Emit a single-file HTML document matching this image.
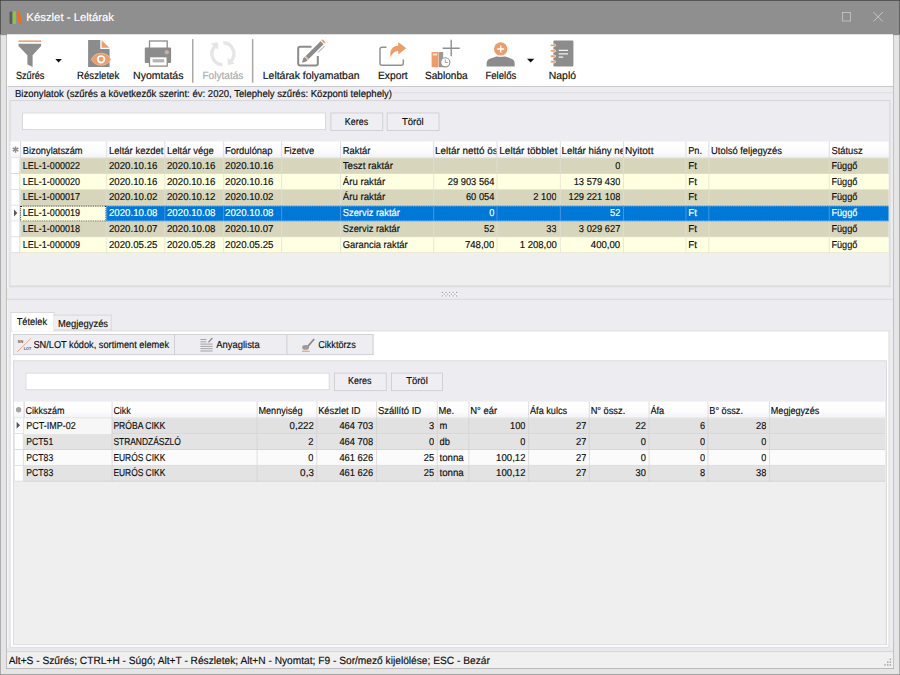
<!DOCTYPE html>
<html lang="hu">
<head>
<meta charset="utf-8">
<title>Készlet - Leltárak</title>
<style>
html,body{margin:0;padding:0;background:#e5e5e5;overflow:hidden;width:900px;height:675px}
#w{position:absolute;left:0;top:0;width:1024px;height:768px;transform:scale(0.87890625);transform-origin:0 0;overflow:hidden;
font-family:"Liberation Sans",sans-serif;font-size:11px;color:#111}
#w div,#w svg.a{position:absolute;box-sizing:border-box}
.t{white-space:nowrap;overflow:hidden;text-rendering:geometricPrecision;-webkit-text-stroke:0.2px currentColor}
.r{text-align:right}
.c{text-align:center}
</style>
</head>
<body>
<div id="w">
<div style="left:0px;top:0px;width:1024px;height:768px;background:#e5e5e5"></div>
<div style="left:0px;top:0px;width:1024px;height:1px;background:#3b3b3b"></div>
<div style="left:0px;top:0px;width:1px;height:39.7px;background:#3f3f3f"></div>
<div style="left:1023px;top:0px;width:1px;height:39.7px;background:#4a4a4a"></div>
<div style="left:0px;top:39px;width:1px;height:729px;background:#a6a6a6"></div>
<div style="left:1023px;top:39px;width:1px;height:729px;background:#a6a6a6"></div>
<div style="left:0px;top:767px;width:1024px;height:1px;background:#989898"></div>
<div style="left:7px;top:39px;width:1px;height:722px;background:#b9b9b9"></div>
<div style="left:1014px;top:39.7px;width:1px;height:721px;background:#dcdcde"></div>
<div style="left:1015px;top:39.7px;width:1px;height:721px;background:#c9c9c9"></div>
<div style="left:1016px;top:39px;width:1px;height:722px;background:#bdbdbd"></div>
<div style="left:7px;top:760px;width:1010px;height:1px;background:#b3b3b3"></div>
<div style="left:1px;top:1px;width:1022px;height:38.7px;background:#8f8f8f"></div>
<svg class="a" style="left:0px;top:0px" width="1024" height="39" viewBox="0 0 1024 39"><g transform="scale(1.137778)"><rect x="9.5" y="11.6" width="2.9" height="12.3" rx="0.8" fill="#5c5c5c"/>
<rect x="12.7" y="11.2" width="3.2" height="12.8" rx="0.8" fill="#8cc63f"/>
<path d="M16.5 12 l3 -0.8 l2.6 12 l-3 0.8 z" fill="#f26b1d"/>
<rect x="842.5" y="12.5" width="8" height="8.5" fill="none" stroke="#c2c2c2" stroke-width="0.9"/>
<path d="M873.5 12.2 L882.7 21.4 M882.7 12.2 L873.5 21.4" fill="none" stroke="#cccccc" stroke-width="0.9"/></g></svg>
<div class="t" style="left:30.20px;top:11.26px;width:198.38px;height:18px;line-height:18px;font-size:12.8px;text-align:left;transform:scaleX(1.0082);transform-origin:0 50%;color:#fff;">Készlet - Leltárak</div>
<div style="left:8px;top:98px;width:1008px;height:643px;background:#ececf1"></div>
<div style="left:8px;top:39px;width:1008px;height:58.5px;background:#fff"></div>
<div style="left:8px;top:97.5px;width:1008px;height:1px;background:#c4c4c8"></div>
<div style="left:447px;top:105.6px;width:569px;height:8.4px;background:#ececee"></div>
<div style="left:447px;top:104.6px;width:569px;height:1px;background:#dcdce1"></div>
<svg class="a" style="left:8px;top:39px" width="1008" height="58" viewBox="8 39 1008 58"><g transform="scale(1.137778)">
<!-- filter -->
<rect x="18.5" y="40.4" width="22.6" height="1.5" fill="#ec9d6b"/>
<path d="M18.5 43.8 H41.1 V46 L32.6 55.2 V67.1 L27.4 64.5 V55.2 L18.5 46 Z" fill="#8c8c8c"/>
<path d="M55.3 59.1 H61.9 L58.6 62.4 Z" fill="#111"/>
<!-- details -->
<path d="M88.1 40.1 H100.3 V49 H109.6 V67.1 H88.1 Z" fill="#8c8c8c"/>
<path d="M101.6 40.3 L109.4 47.7 H101.6 Z" fill="#ec9d6b"/>
<path d="M91.3 59.3 C95.4 51.2 106.8 51.2 110.9 59.3 C106.8 67.4 95.4 67.4 91.3 59.3 Z" fill="#ec9d6b" stroke="#f3dccd" stroke-width="0.5"/>
<circle cx="101.1" cy="59.3" r="3.3" fill="none" stroke="#fff" stroke-width="1.7"/>
<!-- printer -->
<rect x="149.5" y="41" width="17.7" height="8" fill="#fff" stroke="#8c8c8c" stroke-width="1.3"/>
<rect x="144.8" y="47.5" width="26.3" height="15.5" rx="1" fill="#8c8c8c"/>
<rect x="149.5" y="56.7" width="17.7" height="9.4" fill="#fff" stroke="#8c8c8c" stroke-width="1.3"/>
<rect x="152.6" y="59.2" width="11.6" height="3.2" fill="#b4b4b4"/>
<circle cx="166.8" cy="52.3" r="1.8" fill="#d9a79a" stroke="#c8c8c8" stroke-width="0.5"/>
<!-- separators -->
<rect x="192" y="39.1" width="1.5" height="43.6" fill="#a9a9a9"/>
<rect x="251.9" y="39.1" width="1.5" height="43.6" fill="#a9a9a9"/>
<!-- refresh (disabled) -->
<g fill="none" stroke="#e6e6e6" stroke-width="3.4">
<path d="M222.52 64.69 A11.0 11.0 0 0 1 214.73 46.34"/>
<path d="M223.28 42.71 A11.0 11.0 0 0 1 231.07 61.06"/>
</g>
<path d="M210.80 43.54 L218.07 42.34 L218.15 49.71 Z" fill="#e6e6e6"/>
<path d="M235.00 63.86 L227.73 65.06 L227.65 57.69 Z" fill="#e6e6e6"/>
<!-- edit -->
<path d="M311.5 46.8 H300.2 Q298.2 46.8 298.2 48.8 V63.6 Q298.2 65.6 300.2 65.6 H315.8 Q317.8 65.6 317.8 63.6 V56" fill="none" stroke="#8c8c8c" stroke-width="2"/>
<path d="M302 62.8 L303.2 58.6 L320.6 41.2 L323.6 44.2 L306.2 61.6 Z" fill="#8c8c8c" stroke="#fff" stroke-width="1.1" paint-order="stroke"/>
<path d="M304.5 57.3 L305.9 55.9 L308.9 58.9 L307.5 60.3 Z" fill="#f1c6ab"/>
<path d="M321.3 40.5 L322.5 39.3 L325.5 42.3 L324.3 43.5 Z" fill="#ec9d6b"/>
<path d="M318.2 52.4 L324.4 46.2" stroke="#8c8c8c" stroke-width="0.9" fill="none"/>
<!-- export -->
<path d="M386.5 47.2 H382 Q380 47.2 380 49.2 V63.2 Q380 65.2 382 65.2 H401.3 Q403.3 65.2 403.3 63.2 V59.5" fill="none" stroke="#929292" stroke-width="1.5"/>
<path d="M398.3 41.9 L406.2 48.3 L398.3 54.6 V51 Q393 50.6 390.6 57.6 Q388.6 47 398.3 45.6 Z" fill="#ec9d6b"/>
<!-- template -->
<rect x="431.6" y="51.9" width="7" height="15.3" rx="0.6" fill="#ec9d6b"/>
<rect x="432.8" y="53.6" width="4.4" height="1.8" fill="#fbe9dc"/>
<rect x="438.9" y="51.9" width="4.3" height="15.3" rx="0.6" fill="#9a9a9a"/>
<circle cx="445.3" cy="62.3" r="4.6" fill="#fff" stroke="#909090" stroke-width="1.1"/>
<path d="M445.3 59.6 V62.5 H447.6" fill="none" stroke="#909090" stroke-width="0.9"/>
<path d="M442.6 48.2 H459.7 M451.2 39.7 V56.2" fill="none" stroke="#8f8f8f" stroke-width="1.4"/>
<!-- responsible -->
<path d="M486.6 66.6 V63.4 Q486.6 59.6 490.6 58.4 L496.4 56.4 H505 L510.8 58.4 Q514.7 59.6 514.7 63.4 V66.6 Z" fill="#8c8c8c"/>
<circle cx="500.7" cy="48.9" r="7.9" fill="#fff"/>
<circle cx="500.7" cy="48.9" r="6.7" fill="#ec9d6b"/>
<path d="M497.2 48.9 H504.2 M500.7 45.4 V52.4" fill="none" stroke="#fff" stroke-width="1.5"/>
<path d="M527 58.7 H534.3 L530.65 62.4 Z" fill="#111"/>
<!-- log -->
<rect x="553.4" y="40.6" width="20" height="26" rx="0.8" fill="#8c8c8c"/>
<g fill="#ec9d6b" stroke="#fff" stroke-width="0.6">
<rect x="550.4" y="44.2" width="5.2" height="2.3" rx="1.1"/>
<rect x="550.4" y="49.7" width="5.2" height="2.3" rx="1.1"/>
<rect x="550.4" y="55.1" width="5.2" height="2.3" rx="1.1"/>
<rect x="550.4" y="60.6" width="5.2" height="2.3" rx="1.1"/>
</g>
<path d="M558.7 50.4 H568 M558.7 53.8 H568 M558.7 57.1 H563.2" fill="none" stroke="#f2f2f2" stroke-width="1.2"/>
</g></svg>
<div class="t" style="left:-57.77px;top:77.84px;width:184.59px;height:16px;line-height:16px;font-size:12px;text-align:center;transform:scaleX(0.8668);transform-origin:50% 50%;color:#111;">Szűrés</div>
<div class="t" style="left:23.77px;top:77.84px;width:175.36px;height:16px;line-height:16px;font-size:12px;text-align:center;transform:scaleX(0.9124);transform-origin:50% 50%;color:#111;">Részletek</div>
<div class="t" style="left:100.02px;top:77.84px;width:160.18px;height:16px;line-height:16px;font-size:12px;text-align:center;transform:scaleX(0.9989);transform-origin:50% 50%;color:#111;">Nyomtatás</div>
<div class="t" style="left:170.13px;top:77.84px;width:167.18px;height:16px;line-height:16px;font-size:12px;text-align:center;transform:scaleX(0.9570);transform-origin:50% 50%;color:#ababab;">Folytatás</div>
<div class="t" style="left:272.52px;top:77.84px;width:162.08px;height:16px;line-height:16px;font-size:12px;text-align:center;transform:scaleX(0.9872);transform-origin:50% 50%;color:#111;">Leltárak folyamatban</div>
<div class="t" style="left:364.61px;top:77.84px;width:163.93px;height:16px;line-height:16px;font-size:12px;text-align:center;transform:scaleX(0.9760);transform-origin:50% 50%;color:#111;">Export</div>
<div class="t" style="left:423.65px;top:77.84px;width:167.60px;height:16px;line-height:16px;font-size:12px;text-align:center;transform:scaleX(0.9547);transform-origin:50% 50%;color:#111;">Sablonba</div>
<div class="t" style="left:482.49px;top:77.84px;width:175.75px;height:16px;line-height:16px;font-size:12px;text-align:center;transform:scaleX(0.9104);transform-origin:50% 50%;color:#111;">Felelős</div>
<div class="t" style="left:559.05px;top:77.84px;width:161.79px;height:16px;line-height:16px;font-size:12px;text-align:center;transform:scaleX(0.9889);transform-origin:50% 50%;color:#111;">Napló</div>
<div class="t" style="left:16.90px;top:99.05px;width:733.08px;height:16px;line-height:16px;font-size:11.4px;text-align:left;transform:scaleX(0.9549);transform-origin:0 50%;">Bizonylatok (szűrés a következők szerint: év: 2020, Telephely szűrés: Központi telephely)</div>
<div style="left:11px;top:114px;width:1002px;height:213px;border:1px solid #d2d2d6;background:#ececf1"></div>
<div style="left:8px;top:98px;width:1px;height:643px;background:#f6f6f8"></div>
<div style="left:25.4px;top:128.2px;width:345.6px;height:19.6px;background:#fff;border:1px solid #d3d3d7"></div>
<div style="left:376px;top:128px;width:60px;height:21px;background:#efeff3;border:1px solid #cdcdd1"></div>
<div class="t" style="left:372.39px;top:130.95px;width:67.22px;height:16px;line-height:16px;font-size:11.4px;text-align:center;transform:scaleX(0.8926);transform-origin:50% 50%;">Keres</div>
<div style="left:440px;top:128px;width:60px;height:21px;background:#efeff3;border:1px solid #cdcdd1"></div>
<div class="t" style="left:438.34px;top:130.95px;width:63.32px;height:16px;line-height:16px;font-size:11.4px;text-align:center;transform:scaleX(0.9476);transform-origin:50% 50%;">Töröl</div>
<div style="left:12px;top:161px;width:999px;height:165px;background:#efefef"></div>
<div style="left:12px;top:161px;width:999px;height:19px;background:linear-gradient(#ffffff,#fdfdfe 55%,#f4f4f8);border-bottom:1px solid #e4e4e8"></div>
<div style="left:23.3px;top:161px;width:1px;height:19px;background:#d9d9e1"></div>
<div class="t" style="left:25.80px;top:163.75px;width:103.00px;height:16px;line-height:16px;font-size:11.4px;text-align:left;transform:scaleX(0.9243);transform-origin:0 50%;">Bizonylatszám</div>
<div style="left:121px;top:161px;width:1px;height:19px;background:#d9d9e1"></div>
<div class="t" style="left:123.50px;top:163.75px;width:66.83px;height:16px;line-height:16px;font-size:11.4px;text-align:left;transform:scaleX(0.9502);transform-origin:0 50%;">Leltár kezdet</div>
<div style="left:187px;top:161px;width:1px;height:19px;background:#d9d9e1"></div>
<div class="t" style="left:189.50px;top:163.75px;width:68.12px;height:16px;line-height:16px;font-size:11.4px;text-align:left;transform:scaleX(0.9425);transform-origin:0 50%;">Leltár vége</div>
<div style="left:253.7px;top:161px;width:1px;height:19px;background:#d9d9e1"></div>
<div class="t" style="left:256.20px;top:163.75px;width:68.06px;height:16px;line-height:16px;font-size:11.4px;text-align:left;transform:scaleX(0.9388);transform-origin:0 50%;">Fordulónap</div>
<div style="left:320.1px;top:161px;width:1px;height:19px;background:#d9d9e1"></div>
<div class="t" style="left:322.60px;top:163.75px;width:68.68px;height:16px;line-height:16px;font-size:11.4px;text-align:left;transform:scaleX(0.9377);transform-origin:0 50%;">Fizetve</div>
<div style="left:387px;top:161px;width:1px;height:19px;background:#d9d9e1"></div>
<div class="t" style="left:389.50px;top:163.75px;width:109.89px;height:16px;line-height:16px;font-size:11.4px;text-align:left;transform:scaleX(0.9382);transform-origin:0 50%;">Raktár</div>
<div style="left:492.6px;top:161px;width:1px;height:19px;background:#d9d9e1"></div>
<div class="t" style="left:495.10px;top:163.75px;width:71.11px;height:16px;line-height:16px;font-size:11.4px;text-align:left;transform:scaleX(0.9871);transform-origin:0 50%;">Leltár nettó ös</div>
<div style="left:565.3px;top:161px;width:1px;height:19px;background:#d9d9e1"></div>
<div class="t" style="left:567.80px;top:163.75px;width:68.60px;height:16px;line-height:16px;font-size:11.4px;text-align:left;transform:scaleX(1.0058);transform-origin:0 50%;">Leltár többlet</div>
<div style="left:636.8px;top:161px;width:1px;height:19px;background:#d9d9e1"></div>
<div class="t" style="left:639.30px;top:163.75px;width:71.87px;height:16px;line-height:16px;font-size:11.4px;text-align:left;transform:scaleX(0.9671);transform-origin:0 50%;">Leltár hiány ne</div>
<div style="left:708.8px;top:161px;width:1px;height:19px;background:#d9d9e1"></div>
<div class="t" style="left:711.30px;top:163.75px;width:68.62px;height:16px;line-height:16px;font-size:11.4px;text-align:left;transform:scaleX(1.0056);transform-origin:0 50%;">Nyitott</div>
<div style="left:780.3px;top:161px;width:1px;height:19px;background:#d9d9e1"></div>
<div class="t" style="left:782.80px;top:163.75px;width:25.64px;height:16px;line-height:16px;font-size:11.4px;text-align:left;transform:scaleX(0.9205);transform-origin:0 50%;">Pn.</div>
<div style="left:806.4px;top:161px;width:1px;height:19px;background:#d9d9e1"></div>
<div class="t" style="left:808.90px;top:163.75px;width:143.58px;height:16px;line-height:16px;font-size:11.4px;text-align:left;transform:scaleX(0.9368);transform-origin:0 50%;">Utolsó feljegyzés</div>
<div style="left:943.4px;top:161px;width:1px;height:19px;background:#d9d9e1"></div>
<div class="t" style="left:945.90px;top:163.75px;width:69.83px;height:16px;line-height:16px;font-size:11.4px;text-align:left;transform:scaleX(0.9322);transform-origin:0 50%;">Státusz</div>
<div style="left:23.3px;top:161px;width:1px;height:19px;background:#d9d9e1"></div>
<div style="left:23.3px;top:180px;width:987.7px;height:18px;background:#d7d6bd"></div>
<div style="left:12px;top:180px;width:11.3px;height:18px;background:#fff;border-bottom:1px solid #d8d8dc;border-right:1px solid #d8d8dc;border-left:1px solid #e4e4e8"></div>
<div style="left:23.3px;top:197px;width:987.7px;height:1px;background:#deded0"></div>
<div class="t" style="left:25.90px;top:181.15px;width:105.76px;height:16px;line-height:16px;font-size:11.4px;text-align:left;transform:scaleX(0.8992);transform-origin:0 50%;color:#111;">LEL-1-000022</div>
<div style="left:121px;top:180px;width:1px;height:18px;background:#deded0"></div>
<div class="t" style="left:123.60px;top:181.15px;width:65.61px;height:16px;line-height:16px;font-size:11.4px;text-align:left;transform:scaleX(0.9663);transform-origin:0 50%;color:#111;">2020.10.16</div>
<div style="left:187px;top:180px;width:1px;height:18px;background:#deded0"></div>
<div class="t" style="left:189.60px;top:181.15px;width:66.34px;height:16px;line-height:16px;font-size:11.4px;text-align:left;transform:scaleX(0.9663);transform-origin:0 50%;color:#111;">2020.10.16</div>
<div style="left:253.7px;top:180px;width:1px;height:18px;background:#deded0"></div>
<div class="t" style="left:256.30px;top:181.15px;width:66.03px;height:16px;line-height:16px;font-size:11.4px;text-align:left;transform:scaleX(0.9663);transform-origin:0 50%;color:#111;">2020.10.16</div>
<div style="left:320.1px;top:180px;width:1px;height:18px;background:#deded0"></div>
<div style="left:387px;top:180px;width:1px;height:18px;background:#deded0"></div>
<div class="t" style="left:389.60px;top:181.15px;width:106.28px;height:16px;line-height:16px;font-size:11.4px;text-align:left;transform:scaleX(0.9692);transform-origin:0 50%;color:#111;">Teszt raktár</div>
<div style="left:492.6px;top:180px;width:1px;height:18px;background:#deded0"></div>
<div style="left:565.3px;top:180px;width:1px;height:18px;background:#deded0"></div>
<div style="left:636.8px;top:180px;width:1px;height:18px;background:#deded0"></div>
<div class="t" style="left:631.75px;top:181.15px;width:73.85px;height:16px;line-height:16px;font-size:11.4px;text-align:right;transform:scaleX(0.9317);transform-origin:100% 50%;color:#111;">0</div>
<div style="left:708.8px;top:180px;width:1px;height:18px;background:#deded0"></div>
<div style="left:780.3px;top:180px;width:1px;height:18px;background:#deded0"></div>
<div class="t" style="left:782.90px;top:181.15px;width:24.18px;height:16px;line-height:16px;font-size:11.4px;text-align:left;transform:scaleX(0.9718);transform-origin:0 50%;color:#111;">Ft</div>
<div style="left:806.4px;top:180px;width:1px;height:18px;background:#deded0"></div>
<div style="left:943.4px;top:180px;width:1px;height:18px;background:#deded0"></div>
<div class="t" style="left:946.00px;top:181.15px;width:71.14px;height:16px;line-height:16px;font-size:11.4px;text-align:left;transform:scaleX(0.9137);transform-origin:0 50%;color:#111;">Függő</div>
<div style="left:23.3px;top:198px;width:987.7px;height:18px;background:#ffffe1"></div>
<div style="left:12px;top:198px;width:11.3px;height:18px;background:#fff;border-bottom:1px solid #d8d8dc;border-right:1px solid #d8d8dc;border-left:1px solid #e4e4e8"></div>
<div style="left:23.3px;top:215px;width:987.7px;height:1px;background:#e6e6d2"></div>
<div class="t" style="left:25.90px;top:199.15px;width:105.76px;height:16px;line-height:16px;font-size:11.4px;text-align:left;transform:scaleX(0.8992);transform-origin:0 50%;color:#111;">LEL-1-000020</div>
<div style="left:121px;top:198px;width:1px;height:18px;background:#e6e6d2"></div>
<div class="t" style="left:123.60px;top:199.15px;width:65.61px;height:16px;line-height:16px;font-size:11.4px;text-align:left;transform:scaleX(0.9663);transform-origin:0 50%;color:#111;">2020.10.16</div>
<div style="left:187px;top:198px;width:1px;height:18px;background:#e6e6d2"></div>
<div class="t" style="left:189.60px;top:199.15px;width:66.34px;height:16px;line-height:16px;font-size:11.4px;text-align:left;transform:scaleX(0.9663);transform-origin:0 50%;color:#111;">2020.10.16</div>
<div style="left:253.7px;top:198px;width:1px;height:18px;background:#e6e6d2"></div>
<div class="t" style="left:256.30px;top:199.15px;width:66.03px;height:16px;line-height:16px;font-size:11.4px;text-align:left;transform:scaleX(0.9663);transform-origin:0 50%;color:#111;">2020.10.16</div>
<div style="left:320.1px;top:198px;width:1px;height:18px;background:#e6e6d2"></div>
<div style="left:387px;top:198px;width:1px;height:18px;background:#e6e6d2"></div>
<div class="t" style="left:389.60px;top:199.15px;width:106.86px;height:16px;line-height:16px;font-size:11.4px;text-align:left;transform:scaleX(0.9639);transform-origin:0 50%;color:#111;">Áru raktár</div>
<div style="left:492.6px;top:198px;width:1px;height:18px;background:#e6e6d2"></div>
<div class="t" style="left:487.51px;top:199.15px;width:74.59px;height:16px;line-height:16px;font-size:11.4px;text-align:right;transform:scaleX(0.9318);transform-origin:100% 50%;color:#111;">29 903 564</div>
<div style="left:565.3px;top:198px;width:1px;height:18px;background:#e6e6d2"></div>
<div style="left:636.8px;top:198px;width:1px;height:18px;background:#e6e6d2"></div>
<div class="t" style="left:631.76px;top:199.15px;width:73.84px;height:16px;line-height:16px;font-size:11.4px;text-align:right;transform:scaleX(0.9318);transform-origin:100% 50%;color:#111;">13 579 430</div>
<div style="left:708.8px;top:198px;width:1px;height:18px;background:#e6e6d2"></div>
<div style="left:780.3px;top:198px;width:1px;height:18px;background:#e6e6d2"></div>
<div class="t" style="left:782.90px;top:199.15px;width:24.18px;height:16px;line-height:16px;font-size:11.4px;text-align:left;transform:scaleX(0.9718);transform-origin:0 50%;color:#111;">Ft</div>
<div style="left:806.4px;top:198px;width:1px;height:18px;background:#e6e6d2"></div>
<div style="left:943.4px;top:198px;width:1px;height:18px;background:#e6e6d2"></div>
<div class="t" style="left:946.00px;top:199.15px;width:71.14px;height:16px;line-height:16px;font-size:11.4px;text-align:left;transform:scaleX(0.9137);transform-origin:0 50%;color:#111;">Függő</div>
<div style="left:23.3px;top:216px;width:987.7px;height:18px;background:#d7d6bd"></div>
<div style="left:12px;top:216px;width:11.3px;height:18px;background:#fff;border-bottom:1px solid #d8d8dc;border-right:1px solid #d8d8dc;border-left:1px solid #e4e4e8"></div>
<div style="left:23.3px;top:233px;width:987.7px;height:1px;background:#deded0"></div>
<div class="t" style="left:25.90px;top:217.15px;width:105.76px;height:16px;line-height:16px;font-size:11.4px;text-align:left;transform:scaleX(0.8992);transform-origin:0 50%;color:#111;">LEL-1-000017</div>
<div style="left:121px;top:216px;width:1px;height:18px;background:#deded0"></div>
<div class="t" style="left:123.60px;top:217.15px;width:65.61px;height:16px;line-height:16px;font-size:11.4px;text-align:left;transform:scaleX(0.9663);transform-origin:0 50%;color:#111;">2020.10.02</div>
<div style="left:187px;top:216px;width:1px;height:18px;background:#deded0"></div>
<div class="t" style="left:189.60px;top:217.15px;width:66.34px;height:16px;line-height:16px;font-size:11.4px;text-align:left;transform:scaleX(0.9663);transform-origin:0 50%;color:#111;">2020.10.12</div>
<div style="left:253.7px;top:216px;width:1px;height:18px;background:#deded0"></div>
<div class="t" style="left:256.30px;top:217.15px;width:66.03px;height:16px;line-height:16px;font-size:11.4px;text-align:left;transform:scaleX(0.9663);transform-origin:0 50%;color:#111;">2020.10.02</div>
<div style="left:320.1px;top:216px;width:1px;height:18px;background:#deded0"></div>
<div style="left:387px;top:216px;width:1px;height:18px;background:#deded0"></div>
<div class="t" style="left:389.60px;top:217.15px;width:106.86px;height:16px;line-height:16px;font-size:11.4px;text-align:left;transform:scaleX(0.9639);transform-origin:0 50%;color:#111;">Áru raktár</div>
<div style="left:492.6px;top:216px;width:1px;height:18px;background:#deded0"></div>
<div class="t" style="left:487.51px;top:217.15px;width:74.59px;height:16px;line-height:16px;font-size:11.4px;text-align:right;transform:scaleX(0.9317);transform-origin:100% 50%;color:#111;">60 054</div>
<div style="left:565.3px;top:216px;width:1px;height:18px;background:#deded0"></div>
<div class="t" style="left:560.30px;top:217.15px;width:73.30px;height:16px;line-height:16px;font-size:11.4px;text-align:right;transform:scaleX(0.9318);transform-origin:100% 50%;color:#111;">2 100</div>
<div style="left:636.8px;top:216px;width:1px;height:18px;background:#deded0"></div>
<div class="t" style="left:631.76px;top:217.15px;width:73.84px;height:16px;line-height:16px;font-size:11.4px;text-align:right;transform:scaleX(0.9317);transform-origin:100% 50%;color:#111;">129 221 108</div>
<div style="left:708.8px;top:216px;width:1px;height:18px;background:#deded0"></div>
<div style="left:780.3px;top:216px;width:1px;height:18px;background:#deded0"></div>
<div class="t" style="left:782.90px;top:217.15px;width:24.18px;height:16px;line-height:16px;font-size:11.4px;text-align:left;transform:scaleX(0.9718);transform-origin:0 50%;color:#111;">Ft</div>
<div style="left:806.4px;top:216px;width:1px;height:18px;background:#deded0"></div>
<div style="left:943.4px;top:216px;width:1px;height:18px;background:#deded0"></div>
<div class="t" style="left:946.00px;top:217.15px;width:71.14px;height:16px;line-height:16px;font-size:11.4px;text-align:left;transform:scaleX(0.9137);transform-origin:0 50%;color:#111;">Függő</div>
<div style="left:23.3px;top:234px;width:987.7px;height:18px;background:#0078d7"></div>
<div style="left:12px;top:234px;width:11.3px;height:18px;background:#fff;border-bottom:1px solid #d8d8dc;border-right:1px solid #d8d8dc;border-left:1px solid #e4e4e8"></div>
<div style="left:23.3px;top:251px;width:987.7px;height:1px;background:#4d9ae0"></div>
<div style="left:23.3px;top:234px;width:987.7px;height:18px;border-top:1px dotted rgba(255,255,255,.55);border-bottom:1px dotted rgba(255,255,255,.55)"></div>
<div style="left:23.3px;top:234px;width:97.7px;height:18px;background:#ffffe1;border:1px dotted #222"></div>
<div class="t" style="left:25.90px;top:235.15px;width:105.76px;height:16px;line-height:16px;font-size:11.4px;text-align:left;transform:scaleX(0.8992);transform-origin:0 50%;color:#111;">LEL-1-000019</div>
<div style="left:121px;top:234px;width:1px;height:18px;background:#4d9ae0"></div>
<div class="t" style="left:123.60px;top:235.15px;width:65.61px;height:16px;line-height:16px;font-size:11.4px;text-align:left;transform:scaleX(0.9663);transform-origin:0 50%;color:#fff;">2020.10.08</div>
<div style="left:187px;top:234px;width:1px;height:18px;background:#4d9ae0"></div>
<div class="t" style="left:189.60px;top:235.15px;width:66.34px;height:16px;line-height:16px;font-size:11.4px;text-align:left;transform:scaleX(0.9663);transform-origin:0 50%;color:#fff;">2020.10.08</div>
<div style="left:253.7px;top:234px;width:1px;height:18px;background:#4d9ae0"></div>
<div class="t" style="left:256.30px;top:235.15px;width:66.03px;height:16px;line-height:16px;font-size:11.4px;text-align:left;transform:scaleX(0.9663);transform-origin:0 50%;color:#fff;">2020.10.08</div>
<div style="left:320.1px;top:234px;width:1px;height:18px;background:#4d9ae0"></div>
<div style="left:387px;top:234px;width:1px;height:18px;background:#4d9ae0"></div>
<div class="t" style="left:389.60px;top:235.15px;width:110.46px;height:16px;line-height:16px;font-size:11.4px;text-align:left;transform:scaleX(0.9325);transform-origin:0 50%;color:#fff;">Szerviz raktár</div>
<div style="left:492.6px;top:234px;width:1px;height:18px;background:#4d9ae0"></div>
<div class="t" style="left:487.50px;top:235.15px;width:74.60px;height:16px;line-height:16px;font-size:11.4px;text-align:right;transform:scaleX(0.9317);transform-origin:100% 50%;color:#fff;">0</div>
<div style="left:565.3px;top:234px;width:1px;height:18px;background:#4d9ae0"></div>
<div style="left:636.8px;top:234px;width:1px;height:18px;background:#4d9ae0"></div>
<div class="t" style="left:631.75px;top:235.15px;width:73.85px;height:16px;line-height:16px;font-size:11.4px;text-align:right;transform:scaleX(0.9317);transform-origin:100% 50%;color:#fff;">52</div>
<div style="left:708.8px;top:234px;width:1px;height:18px;background:#4d9ae0"></div>
<div style="left:780.3px;top:234px;width:1px;height:18px;background:#4d9ae0"></div>
<div class="t" style="left:782.90px;top:235.15px;width:24.18px;height:16px;line-height:16px;font-size:11.4px;text-align:left;transform:scaleX(0.9718);transform-origin:0 50%;color:#fff;">Ft</div>
<div style="left:806.4px;top:234px;width:1px;height:18px;background:#4d9ae0"></div>
<div style="left:943.4px;top:234px;width:1px;height:18px;background:#4d9ae0"></div>
<div class="t" style="left:946.00px;top:235.15px;width:71.14px;height:16px;line-height:16px;font-size:11.4px;text-align:left;transform:scaleX(0.9137);transform-origin:0 50%;color:#fff;">Függő</div>
<div style="left:23.3px;top:252px;width:987.7px;height:18px;background:#d7d6bd"></div>
<div style="left:12px;top:252px;width:11.3px;height:18px;background:#fff;border-bottom:1px solid #d8d8dc;border-right:1px solid #d8d8dc;border-left:1px solid #e4e4e8"></div>
<div style="left:23.3px;top:269px;width:987.7px;height:1px;background:#deded0"></div>
<div class="t" style="left:25.90px;top:253.15px;width:105.76px;height:16px;line-height:16px;font-size:11.4px;text-align:left;transform:scaleX(0.8992);transform-origin:0 50%;color:#111;">LEL-1-000018</div>
<div style="left:121px;top:252px;width:1px;height:18px;background:#deded0"></div>
<div class="t" style="left:123.60px;top:253.15px;width:65.61px;height:16px;line-height:16px;font-size:11.4px;text-align:left;transform:scaleX(0.9663);transform-origin:0 50%;color:#111;">2020.10.07</div>
<div style="left:187px;top:252px;width:1px;height:18px;background:#deded0"></div>
<div class="t" style="left:189.60px;top:253.15px;width:66.34px;height:16px;line-height:16px;font-size:11.4px;text-align:left;transform:scaleX(0.9663);transform-origin:0 50%;color:#111;">2020.10.08</div>
<div style="left:253.7px;top:252px;width:1px;height:18px;background:#deded0"></div>
<div class="t" style="left:256.30px;top:253.15px;width:66.03px;height:16px;line-height:16px;font-size:11.4px;text-align:left;transform:scaleX(0.9663);transform-origin:0 50%;color:#111;">2020.10.07</div>
<div style="left:320.1px;top:252px;width:1px;height:18px;background:#deded0"></div>
<div style="left:387px;top:252px;width:1px;height:18px;background:#deded0"></div>
<div class="t" style="left:389.60px;top:253.15px;width:110.46px;height:16px;line-height:16px;font-size:11.4px;text-align:left;transform:scaleX(0.9325);transform-origin:0 50%;color:#111;">Szerviz raktár</div>
<div style="left:492.6px;top:252px;width:1px;height:18px;background:#deded0"></div>
<div class="t" style="left:487.50px;top:253.15px;width:74.60px;height:16px;line-height:16px;font-size:11.4px;text-align:right;transform:scaleX(0.9317);transform-origin:100% 50%;color:#111;">52</div>
<div style="left:565.3px;top:252px;width:1px;height:18px;background:#deded0"></div>
<div class="t" style="left:560.29px;top:253.15px;width:73.31px;height:16px;line-height:16px;font-size:11.4px;text-align:right;transform:scaleX(0.9317);transform-origin:100% 50%;color:#111;">33</div>
<div style="left:636.8px;top:252px;width:1px;height:18px;background:#deded0"></div>
<div class="t" style="left:631.76px;top:253.15px;width:73.84px;height:16px;line-height:16px;font-size:11.4px;text-align:right;transform:scaleX(0.9318);transform-origin:100% 50%;color:#111;">3 029 627</div>
<div style="left:708.8px;top:252px;width:1px;height:18px;background:#deded0"></div>
<div style="left:780.3px;top:252px;width:1px;height:18px;background:#deded0"></div>
<div class="t" style="left:782.90px;top:253.15px;width:24.18px;height:16px;line-height:16px;font-size:11.4px;text-align:left;transform:scaleX(0.9718);transform-origin:0 50%;color:#111;">Ft</div>
<div style="left:806.4px;top:252px;width:1px;height:18px;background:#deded0"></div>
<div style="left:943.4px;top:252px;width:1px;height:18px;background:#deded0"></div>
<div class="t" style="left:946.00px;top:253.15px;width:71.14px;height:16px;line-height:16px;font-size:11.4px;text-align:left;transform:scaleX(0.9137);transform-origin:0 50%;color:#111;">Függő</div>
<div style="left:23.3px;top:270px;width:987.7px;height:18px;background:#ffffe1"></div>
<div style="left:12px;top:270px;width:11.3px;height:18px;background:#fff;border-bottom:1px solid #d8d8dc;border-right:1px solid #d8d8dc;border-left:1px solid #e4e4e8"></div>
<div style="left:23.3px;top:287px;width:987.7px;height:1px;background:#e6e6d2"></div>
<div class="t" style="left:25.90px;top:271.15px;width:105.76px;height:16px;line-height:16px;font-size:11.4px;text-align:left;transform:scaleX(0.8992);transform-origin:0 50%;color:#111;">LEL-1-000009</div>
<div style="left:121px;top:270px;width:1px;height:18px;background:#e6e6d2"></div>
<div class="t" style="left:123.60px;top:271.15px;width:65.61px;height:16px;line-height:16px;font-size:11.4px;text-align:left;transform:scaleX(0.9663);transform-origin:0 50%;color:#111;">2020.05.25</div>
<div style="left:187px;top:270px;width:1px;height:18px;background:#e6e6d2"></div>
<div class="t" style="left:189.60px;top:271.15px;width:66.34px;height:16px;line-height:16px;font-size:11.4px;text-align:left;transform:scaleX(0.9663);transform-origin:0 50%;color:#111;">2020.05.28</div>
<div style="left:253.7px;top:270px;width:1px;height:18px;background:#e6e6d2"></div>
<div class="t" style="left:256.30px;top:271.15px;width:66.03px;height:16px;line-height:16px;font-size:11.4px;text-align:left;transform:scaleX(0.9663);transform-origin:0 50%;color:#111;">2020.05.25</div>
<div style="left:320.1px;top:270px;width:1px;height:18px;background:#e6e6d2"></div>
<div style="left:387px;top:270px;width:1px;height:18px;background:#e6e6d2"></div>
<div class="t" style="left:389.60px;top:271.15px;width:109.60px;height:16px;line-height:16px;font-size:11.4px;text-align:left;transform:scaleX(0.9398);transform-origin:0 50%;color:#111;">Garancia raktár</div>
<div style="left:492.6px;top:270px;width:1px;height:18px;background:#e6e6d2"></div>
<div class="t" style="left:489.70px;top:271.15px;width:72.40px;height:16px;line-height:16px;font-size:11.4px;text-align:right;transform:scaleX(0.9600);transform-origin:100% 50%;color:#111;">748,00</div>
<div style="left:565.3px;top:270px;width:1px;height:18px;background:#e6e6d2"></div>
<div class="t" style="left:562.00px;top:271.15px;width:71.60px;height:16px;line-height:16px;font-size:11.4px;text-align:right;transform:scaleX(0.9540);transform-origin:100% 50%;color:#111;">1 208,00</div>
<div style="left:636.8px;top:270px;width:1px;height:18px;background:#e6e6d2"></div>
<div class="t" style="left:633.93px;top:271.15px;width:71.67px;height:16px;line-height:16px;font-size:11.4px;text-align:right;transform:scaleX(0.9600);transform-origin:100% 50%;color:#111;">400,00</div>
<div style="left:708.8px;top:270px;width:1px;height:18px;background:#e6e6d2"></div>
<div style="left:780.3px;top:270px;width:1px;height:18px;background:#e6e6d2"></div>
<div class="t" style="left:782.90px;top:271.15px;width:24.18px;height:16px;line-height:16px;font-size:11.4px;text-align:left;transform:scaleX(0.9718);transform-origin:0 50%;color:#111;">Ft</div>
<div style="left:806.4px;top:270px;width:1px;height:18px;background:#e6e6d2"></div>
<div style="left:943.4px;top:270px;width:1px;height:18px;background:#e6e6d2"></div>
<div class="t" style="left:946.00px;top:271.15px;width:71.14px;height:16px;line-height:16px;font-size:11.4px;text-align:left;transform:scaleX(0.9137);transform-origin:0 50%;color:#111;">Függő</div>
<svg class="a" style="left:8px;top:161px" width="20" height="100" viewBox="8 161 20 100"><g transform="scale(1.137778)"><path d="M14 209.6 L17.3 213 L14 216.4 Z" fill="#5a5a5a"/><path d="M15.5 146.4 V152.8 M12.7 148 L18.3 151.2 M18.3 148 L12.7 151.2" stroke="#8f8f8f" stroke-width="1.5" fill="none"/></g></svg>
<div style="left:11px;top:325.4px;width:1002px;height:1.1px;background:#cfcfd3"></div>
<div style="left:8px;top:327px;width:1008px;height:14px;background:#ececf1"></div>
<div style="left:8px;top:340px;width:1008px;height:1px;background:#d6d6da"></div>
<svg class="a" style="left:496px;top:328px" width="32" height="12" viewBox="496 328 32 12"><g transform="scale(1.137778)"><rect x="441.90" y="291.90" width="1.0" height="1.0" fill="#85858a"/><rect x="443.68" y="291.90" width="1.5" height="1.5" fill="#fbfbfd"/><rect x="445.46" y="291.90" width="1.0" height="1.0" fill="#85858a"/><rect x="447.24" y="291.90" width="1.5" height="1.5" fill="#fbfbfd"/><rect x="449.02" y="291.90" width="1.0" height="1.0" fill="#85858a"/><rect x="450.80" y="291.90" width="1.5" height="1.5" fill="#fbfbfd"/><rect x="452.58" y="291.90" width="1.0" height="1.0" fill="#85858a"/><rect x="454.36" y="291.90" width="1.5" height="1.5" fill="#fbfbfd"/><rect x="456.14" y="291.90" width="1.0" height="1.0" fill="#85858a"/><rect x="441.90" y="293.66" width="1.5" height="1.5" fill="#fbfbfd"/><rect x="443.68" y="293.66" width="1.0" height="1.0" fill="#85858a"/><rect x="445.46" y="293.66" width="1.5" height="1.5" fill="#fbfbfd"/><rect x="447.24" y="293.66" width="1.0" height="1.0" fill="#85858a"/><rect x="449.02" y="293.66" width="1.5" height="1.5" fill="#fbfbfd"/><rect x="450.80" y="293.66" width="1.0" height="1.0" fill="#85858a"/><rect x="452.58" y="293.66" width="1.5" height="1.5" fill="#fbfbfd"/><rect x="454.36" y="293.66" width="1.0" height="1.0" fill="#85858a"/><rect x="456.14" y="293.66" width="1.5" height="1.5" fill="#fbfbfd"/><rect x="441.90" y="295.42" width="1.0" height="1.0" fill="#85858a"/><rect x="443.68" y="295.42" width="1.5" height="1.5" fill="#fbfbfd"/><rect x="445.46" y="295.42" width="1.0" height="1.0" fill="#85858a"/><rect x="447.24" y="295.42" width="1.5" height="1.5" fill="#fbfbfd"/><rect x="449.02" y="295.42" width="1.0" height="1.0" fill="#85858a"/><rect x="450.80" y="295.42" width="1.5" height="1.5" fill="#fbfbfd"/><rect x="452.58" y="295.42" width="1.0" height="1.0" fill="#85858a"/><rect x="454.36" y="295.42" width="1.5" height="1.5" fill="#fbfbfd"/><rect x="456.14" y="295.42" width="1.0" height="1.0" fill="#85858a"/></g></svg>
<div style="left:11px;top:376px;width:1001px;height:361px;background:#fff;border:1px solid #d4d4d8"></div>
<div style="left:12px;top:355px;width:50px;height:22px;background:#fff;border:1px solid #d4d4d8;border-bottom:none"></div>
<div style="left:61px;top:358px;width:66px;height:18px;background:#efeff2;border:1px solid #d4d4d8;border-left:none"></div>
<div class="t" style="left:19.20px;top:358.75px;width:54.11px;height:16px;line-height:16px;font-size:11.4px;text-align:left;transform:scaleX(0.9240);transform-origin:0 50%;">Tételek</div>
<div class="t" style="left:66.00px;top:360.75px;width:66.20px;height:16px;line-height:16px;font-size:11.4px;text-align:left;transform:scaleX(0.9365);transform-origin:0 50%;">Megjegyzés</div>
<div style="left:15px;top:380px;width:184px;height:24px;background:#eeeef2;border:1px solid #cdcdd1"></div>
<div class="t" style="left:37.80px;top:385.15px;width:173.91px;height:16px;line-height:16px;font-size:11.4px;text-align:left;transform:scaleX(0.9211);transform-origin:0 50%;">SN/LOT kódok, sortiment elemek</div>
<div style="left:198px;top:380px;width:129px;height:24px;background:#eeeef2;border:1px solid #cdcdd1"></div>
<div class="t" style="left:246.40px;top:385.15px;width:84.50px;height:16px;line-height:16px;font-size:11.4px;text-align:left;transform:scaleX(0.9420);transform-origin:0 50%;">Anyaglista</div>
<div style="left:326px;top:380px;width:99px;height:24px;background:#eeeef2;border:1px solid #cdcdd1"></div>
<div class="t" style="left:362.00px;top:385.15px;width:67.98px;height:16px;line-height:16px;font-size:11.4px;text-align:left;transform:scaleX(0.9120);transform-origin:0 50%;">Cikktörzs</div>
<svg class="a" style="left:15px;top:380px" width="420" height="26" viewBox="15 380 420 26"><g transform="scale(1.137778)"><path d="M17.2 351.8 L31 338.4" stroke="#e9a37c" stroke-width="0.9" fill="none"/>
<text x="17.6" y="342.6" font-family="Liberation Sans, sans-serif" font-weight="bold" font-size="4.3" fill="#5a5a5a" textLength="5.8" lengthAdjust="spacingAndGlyphs">SN</text>
<text x="23.8" y="349.6" font-family="Liberation Sans, sans-serif" font-weight="bold" font-size="4.3" fill="#5a5a5a" textLength="7.6" lengthAdjust="spacingAndGlyphs">LOT</text>
<g fill="none" stroke="#9a9a9a" stroke-width="0.9"><path d="M200.4 339.5 H206.4 M200.4 341.8 H206.4 M200.4 344.1 H212.6 M200.4 346.4 H212.6 M200.4 348.7 H212.6 M200.4 351 H212.6"/></g>
<path d="M208.4 342.4 L212.4 338" stroke="#8a8a8a" stroke-width="1.3" fill="none"/>
<path d="M307.6 346.6 L314.2 339" stroke="#8a8a8a" stroke-width="1.8" fill="none"/>
<ellipse cx="305.6" cy="347.4" rx="3.4" ry="2.3" fill="#9a9a9a"/>
<rect x="302" y="350.6" width="7.6" height="1.3" fill="#e9a37c"/></g></svg>
<div style="left:15px;top:409.5px;width:994px;height:324px;background:#ececf1;border:1px solid #dadadc"></div>
<div style="left:29px;top:424.2px;width:346px;height:19.6px;background:#fff;border:1px solid #d3d3d7"></div>
<div style="left:380px;top:423.5px;width:59.5px;height:21px;background:#efeff3;border:1px solid #cdcdd1"></div>
<div class="t" style="left:376.42px;top:426.45px;width:66.66px;height:16px;line-height:16px;font-size:11.4px;text-align:center;transform:scaleX(0.8926);transform-origin:50% 50%;">Keres</div>
<div style="left:444.5px;top:423.5px;width:59.5px;height:21px;background:#efeff3;border:1px solid #cdcdd1"></div>
<div class="t" style="left:442.85px;top:426.45px;width:62.79px;height:16px;line-height:16px;font-size:11.4px;text-align:center;transform:scaleX(0.9476);transform-origin:50% 50%;">Töröl</div>
<div style="left:15.5px;top:457px;width:991.9px;height:276px;background:#efefef"></div>
<div style="left:15.5px;top:457px;width:991.9px;height:19px;background:linear-gradient(#ffffff,#fdfdfe 55%,#f4f4f8);border-bottom:1px solid #e4e4e8"></div>
<div style="left:27.4px;top:457px;width:1px;height:19px;background:#d9d9e1"></div>
<div class="t" style="left:29.20px;top:459.75px;width:109.06px;height:16px;line-height:16px;font-size:11.4px;text-align:left;transform:scaleX(0.8967);transform-origin:0 50%;">Cikkszám</div>
<div style="left:127px;top:457px;width:1px;height:19px;background:#d9d9e1"></div>
<div class="t" style="left:128.80px;top:459.75px;width:183.73px;height:16px;line-height:16px;font-size:11.4px;text-align:left;transform:scaleX(0.8883);transform-origin:0 50%;">Cikk</div>
<div style="left:292px;top:457px;width:1px;height:19px;background:#d9d9e1"></div>
<div class="t" style="left:293.80px;top:459.75px;width:72.69px;height:16px;line-height:16px;font-size:11.4px;text-align:left;transform:scaleX(0.9107);transform-origin:0 50%;">Mennyiség</div>
<div style="left:360px;top:457px;width:1px;height:19px;background:#d9d9e1"></div>
<div class="t" style="left:361.80px;top:459.75px;width:71.29px;height:16px;line-height:16px;font-size:11.4px;text-align:left;transform:scaleX(0.9285);transform-origin:0 50%;">Készlet ID</div>
<div style="left:428px;top:457px;width:1px;height:19px;background:#d9d9e1"></div>
<div class="t" style="left:429.80px;top:459.75px;width:71.35px;height:16px;line-height:16px;font-size:11.4px;text-align:left;transform:scaleX(0.9475);transform-origin:0 50%;">Szállító ID</div>
<div style="left:497.4px;top:457px;width:1px;height:19px;background:#d9d9e1"></div>
<div class="t" style="left:499.20px;top:459.75px;width:36.25px;height:16px;line-height:16px;font-size:11.4px;text-align:left;transform:scaleX(0.9325);transform-origin:0 50%;">Me.</div>
<div style="left:533px;top:457px;width:1px;height:19px;background:#d9d9e1"></div>
<div class="t" style="left:534.80px;top:459.75px;width:70.78px;height:16px;line-height:16px;font-size:11.4px;text-align:left;transform:scaleX(0.9409);transform-origin:0 50%;">N° eár</div>
<div style="left:601.4px;top:457px;width:1px;height:19px;background:#d9d9e1"></div>
<div class="t" style="left:603.20px;top:459.75px;width:72.98px;height:16px;line-height:16px;font-size:11.4px;text-align:left;transform:scaleX(0.9153);transform-origin:0 50%;">Áfa kulcs</div>
<div style="left:670px;top:457px;width:1px;height:19px;background:#d9d9e1"></div>
<div class="t" style="left:671.80px;top:459.75px;width:71.99px;height:16px;line-height:16px;font-size:11.4px;text-align:left;transform:scaleX(0.9251);transform-origin:0 50%;">N° össz.</div>
<div style="left:738.4px;top:457px;width:1px;height:19px;background:#d9d9e1"></div>
<div class="t" style="left:740.20px;top:459.75px;width:70.83px;height:16px;line-height:16px;font-size:11.4px;text-align:left;transform:scaleX(0.9205);transform-origin:0 50%;">Áfa</div>
<div style="left:805.4px;top:457px;width:1px;height:19px;background:#d9d9e1"></div>
<div class="t" style="left:807.20px;top:459.75px;width:73.84px;height:16px;line-height:16px;font-size:11.4px;text-align:left;transform:scaleX(0.9155);transform-origin:0 50%;">B° össz.</div>
<div style="left:874.8px;top:457px;width:1px;height:19px;background:#d9d9e1"></div>
<div class="t" style="left:876.60px;top:459.75px;width:144.32px;height:16px;line-height:16px;font-size:11.4px;text-align:left;transform:scaleX(0.9063);transform-origin:0 50%;">Megjegyzés</div>
<div style="left:27.4px;top:457px;width:1px;height:19px;background:#d9d9e1"></div>
<div style="left:27.4px;top:476px;width:980px;height:18px;background:#e1e1e1"></div>
<div style="left:15.5px;top:476px;width:11.9px;height:18px;background:#fff;border-bottom:1px solid #d8d8dc;border-right:1px solid #d8d8dc;border-left:1px solid #e4e4e8"></div>
<div style="left:27.4px;top:493px;width:980px;height:1px;background:#d4d4d4"></div>
<div style="left:27.4px;top:476px;width:99.6px;height:18px;background:#f7f7f7;"></div>
<div class="t" style="left:29.80px;top:477.15px;width:108.63px;height:16px;line-height:16px;font-size:11.4px;text-align:left;transform:scaleX(0.8948);transform-origin:0 50%;color:#111;">PCT-IMP-02</div>
<div style="left:127px;top:476px;width:1px;height:18px;background:#d4d4d4"></div>
<div class="t" style="left:129.40px;top:477.15px;width:190.10px;height:16px;line-height:16px;font-size:11.4px;text-align:left;transform:scaleX(0.8553);transform-origin:0 50%;color:#111;">PRÓBA CIKK</div>
<div style="left:292px;top:476px;width:1px;height:18px;background:#d4d4d4"></div>
<div class="t" style="left:289.74px;top:477.15px;width:67.06px;height:16px;line-height:16px;font-size:11.4px;text-align:right;transform:scaleX(0.9663);transform-origin:100% 50%;color:#111;">0,222</div>
<div style="left:360px;top:476px;width:1px;height:18px;background:#d4d4d4"></div>
<div class="t" style="left:355.25px;top:477.15px;width:69.55px;height:16px;line-height:16px;font-size:11.4px;text-align:right;transform:scaleX(0.9317);transform-origin:100% 50%;color:#111;">464 703</div>
<div style="left:428px;top:476px;width:1px;height:18px;background:#d4d4d4"></div>
<div class="t" style="left:423.14px;top:477.15px;width:71.06px;height:16px;line-height:16px;font-size:11.4px;text-align:right;transform:scaleX(0.9317);transform-origin:100% 50%;color:#111;">3</div>
<div style="left:497.4px;top:476px;width:1px;height:18px;background:#d4d4d4"></div>
<div class="t" style="left:499.80px;top:477.15px;width:35.58px;height:16px;line-height:16px;font-size:11.4px;text-align:left;transform:scaleX(0.9330);transform-origin:0 50%;color:#111;">m</div>
<div style="left:533px;top:476px;width:1px;height:18px;background:#d4d4d4"></div>
<div class="t" style="left:528.22px;top:477.15px;width:69.98px;height:16px;line-height:16px;font-size:11.4px;text-align:right;transform:scaleX(0.9317);transform-origin:100% 50%;color:#111;">100</div>
<div style="left:601.4px;top:476px;width:1px;height:18px;background:#d4d4d4"></div>
<div class="t" style="left:596.60px;top:477.15px;width:70.20px;height:16px;line-height:16px;font-size:11.4px;text-align:right;transform:scaleX(0.9317);transform-origin:100% 50%;color:#111;">27</div>
<div style="left:670px;top:476px;width:1px;height:18px;background:#d4d4d4"></div>
<div class="t" style="left:665.22px;top:477.15px;width:69.98px;height:16px;line-height:16px;font-size:11.4px;text-align:right;transform:scaleX(0.9317);transform-origin:100% 50%;color:#111;">22</div>
<div style="left:738.4px;top:476px;width:1px;height:18px;background:#d4d4d4"></div>
<div class="t" style="left:733.72px;top:477.15px;width:68.48px;height:16px;line-height:16px;font-size:11.4px;text-align:right;transform:scaleX(0.9317);transform-origin:100% 50%;color:#111;">6</div>
<div style="left:805.4px;top:476px;width:1px;height:18px;background:#d4d4d4"></div>
<div class="t" style="left:800.54px;top:477.15px;width:71.06px;height:16px;line-height:16px;font-size:11.4px;text-align:right;transform:scaleX(0.9317);transform-origin:100% 50%;color:#111;">28</div>
<div style="left:874.8px;top:476px;width:1px;height:18px;background:#d4d4d4"></div>
<div style="left:27.4px;top:494px;width:980px;height:18px;background:#e3e3e3"></div>
<div style="left:15.5px;top:494px;width:11.9px;height:18px;background:#fff;border-bottom:1px solid #d8d8dc;border-right:1px solid #d8d8dc;border-left:1px solid #e4e4e8"></div>
<div style="left:27.4px;top:511px;width:980px;height:1px;background:#d4d4d4"></div>
<div class="t" style="left:29.80px;top:495.15px;width:113.00px;height:16px;line-height:16px;font-size:11.4px;text-align:left;transform:scaleX(0.8602);transform-origin:0 50%;color:#111;">PCT51</div>
<div style="left:127px;top:494px;width:1px;height:18px;background:#d4d4d4"></div>
<div class="t" style="left:129.40px;top:495.15px;width:193.14px;height:16px;line-height:16px;font-size:11.4px;text-align:left;transform:scaleX(0.8419);transform-origin:0 50%;color:#111;">STRANDZÁSZLÓ</div>
<div style="left:292px;top:494px;width:1px;height:18px;background:#d4d4d4"></div>
<div class="t" style="left:287.25px;top:495.15px;width:69.55px;height:16px;line-height:16px;font-size:11.4px;text-align:right;transform:scaleX(0.9317);transform-origin:100% 50%;color:#111;">2</div>
<div style="left:360px;top:494px;width:1px;height:18px;background:#d4d4d4"></div>
<div class="t" style="left:355.25px;top:495.15px;width:69.55px;height:16px;line-height:16px;font-size:11.4px;text-align:right;transform:scaleX(0.9317);transform-origin:100% 50%;color:#111;">464 708</div>
<div style="left:428px;top:494px;width:1px;height:18px;background:#d4d4d4"></div>
<div class="t" style="left:423.14px;top:495.15px;width:71.06px;height:16px;line-height:16px;font-size:11.4px;text-align:right;transform:scaleX(0.9317);transform-origin:100% 50%;color:#111;">0</div>
<div style="left:497.4px;top:494px;width:1px;height:18px;background:#d4d4d4"></div>
<div class="t" style="left:499.80px;top:495.15px;width:35.64px;height:16px;line-height:16px;font-size:11.4px;text-align:left;transform:scaleX(0.9317);transform-origin:0 50%;color:#111;">db</div>
<div style="left:533px;top:494px;width:1px;height:18px;background:#d4d4d4"></div>
<div class="t" style="left:528.22px;top:495.15px;width:69.98px;height:16px;line-height:16px;font-size:11.4px;text-align:right;transform:scaleX(0.9317);transform-origin:100% 50%;color:#111;">0</div>
<div style="left:601.4px;top:494px;width:1px;height:18px;background:#d4d4d4"></div>
<div class="t" style="left:596.60px;top:495.15px;width:70.20px;height:16px;line-height:16px;font-size:11.4px;text-align:right;transform:scaleX(0.9317);transform-origin:100% 50%;color:#111;">27</div>
<div style="left:670px;top:494px;width:1px;height:18px;background:#d4d4d4"></div>
<div class="t" style="left:665.22px;top:495.15px;width:69.98px;height:16px;line-height:16px;font-size:11.4px;text-align:right;transform:scaleX(0.9317);transform-origin:100% 50%;color:#111;">0</div>
<div style="left:738.4px;top:494px;width:1px;height:18px;background:#d4d4d4"></div>
<div class="t" style="left:733.72px;top:495.15px;width:68.48px;height:16px;line-height:16px;font-size:11.4px;text-align:right;transform:scaleX(0.9317);transform-origin:100% 50%;color:#111;">0</div>
<div style="left:805.4px;top:494px;width:1px;height:18px;background:#d4d4d4"></div>
<div class="t" style="left:800.54px;top:495.15px;width:71.06px;height:16px;line-height:16px;font-size:11.4px;text-align:right;transform:scaleX(0.9317);transform-origin:100% 50%;color:#111;">0</div>
<div style="left:874.8px;top:494px;width:1px;height:18px;background:#d4d4d4"></div>
<div style="left:27.4px;top:512px;width:980px;height:18px;background:#fbfbfb"></div>
<div style="left:15.5px;top:512px;width:11.9px;height:18px;background:#fff;border-bottom:1px solid #d8d8dc;border-right:1px solid #d8d8dc;border-left:1px solid #e4e4e8"></div>
<div style="left:27.4px;top:529px;width:980px;height:1px;background:#dadada"></div>
<div class="t" style="left:29.80px;top:513.15px;width:113.00px;height:16px;line-height:16px;font-size:11.4px;text-align:left;transform:scaleX(0.8602);transform-origin:0 50%;color:#111;">PCT83</div>
<div style="left:127px;top:512px;width:1px;height:18px;background:#dadada"></div>
<div class="t" style="left:129.40px;top:513.15px;width:193.56px;height:16px;line-height:16px;font-size:11.4px;text-align:left;transform:scaleX(0.8400);transform-origin:0 50%;color:#111;">EURÓS CIKK</div>
<div style="left:292px;top:512px;width:1px;height:18px;background:#dadada"></div>
<div class="t" style="left:287.25px;top:513.15px;width:69.55px;height:16px;line-height:16px;font-size:11.4px;text-align:right;transform:scaleX(0.9317);transform-origin:100% 50%;color:#111;">0</div>
<div style="left:360px;top:512px;width:1px;height:18px;background:#dadada"></div>
<div class="t" style="left:355.25px;top:513.15px;width:69.55px;height:16px;line-height:16px;font-size:11.4px;text-align:right;transform:scaleX(0.9317);transform-origin:100% 50%;color:#111;">461 626</div>
<div style="left:428px;top:512px;width:1px;height:18px;background:#dadada"></div>
<div class="t" style="left:423.14px;top:513.15px;width:71.06px;height:16px;line-height:16px;font-size:11.4px;text-align:right;transform:scaleX(0.9317);transform-origin:100% 50%;color:#111;">25</div>
<div style="left:497.4px;top:512px;width:1px;height:18px;background:#dadada"></div>
<div class="t" style="left:499.80px;top:513.15px;width:34.36px;height:16px;line-height:16px;font-size:11.4px;text-align:left;transform:scaleX(0.9663);transform-origin:0 50%;color:#111;">tonna</div>
<div style="left:533px;top:512px;width:1px;height:18px;background:#dadada"></div>
<div class="t" style="left:530.28px;top:513.15px;width:67.92px;height:16px;line-height:16px;font-size:11.4px;text-align:right;transform:scaleX(0.9600);transform-origin:100% 50%;color:#111;">100,12</div>
<div style="left:601.4px;top:512px;width:1px;height:18px;background:#dadada"></div>
<div class="t" style="left:596.60px;top:513.15px;width:70.20px;height:16px;line-height:16px;font-size:11.4px;text-align:right;transform:scaleX(0.9317);transform-origin:100% 50%;color:#111;">27</div>
<div style="left:670px;top:512px;width:1px;height:18px;background:#dadada"></div>
<div class="t" style="left:665.22px;top:513.15px;width:69.98px;height:16px;line-height:16px;font-size:11.4px;text-align:right;transform:scaleX(0.9317);transform-origin:100% 50%;color:#111;">0</div>
<div style="left:738.4px;top:512px;width:1px;height:18px;background:#dadada"></div>
<div class="t" style="left:733.72px;top:513.15px;width:68.48px;height:16px;line-height:16px;font-size:11.4px;text-align:right;transform:scaleX(0.9317);transform-origin:100% 50%;color:#111;">0</div>
<div style="left:805.4px;top:512px;width:1px;height:18px;background:#dadada"></div>
<div class="t" style="left:800.54px;top:513.15px;width:71.06px;height:16px;line-height:16px;font-size:11.4px;text-align:right;transform:scaleX(0.9317);transform-origin:100% 50%;color:#111;">0</div>
<div style="left:874.8px;top:512px;width:1px;height:18px;background:#dadada"></div>
<div style="left:27.4px;top:530px;width:980px;height:18px;background:#e3e3e3"></div>
<div style="left:15.5px;top:530px;width:11.9px;height:18px;background:#fff;border-bottom:1px solid #d8d8dc;border-right:1px solid #d8d8dc;border-left:1px solid #e4e4e8"></div>
<div style="left:27.4px;top:547px;width:980px;height:1px;background:#d4d4d4"></div>
<div class="t" style="left:29.80px;top:531.15px;width:113.00px;height:16px;line-height:16px;font-size:11.4px;text-align:left;transform:scaleX(0.8602);transform-origin:0 50%;color:#111;">PCT83</div>
<div style="left:127px;top:530px;width:1px;height:18px;background:#d4d4d4"></div>
<div class="t" style="left:129.40px;top:531.15px;width:193.56px;height:16px;line-height:16px;font-size:11.4px;text-align:left;transform:scaleX(0.8400);transform-origin:0 50%;color:#111;">EURÓS CIKK</div>
<div style="left:292px;top:530px;width:1px;height:18px;background:#d4d4d4"></div>
<div class="t" style="left:291.61px;top:531.15px;width:65.19px;height:16px;line-height:16px;font-size:11.4px;text-align:right;transform:scaleX(0.9939);transform-origin:100% 50%;color:#111;">0,3</div>
<div style="left:360px;top:530px;width:1px;height:18px;background:#d4d4d4"></div>
<div class="t" style="left:355.25px;top:531.15px;width:69.55px;height:16px;line-height:16px;font-size:11.4px;text-align:right;transform:scaleX(0.9317);transform-origin:100% 50%;color:#111;">461 626</div>
<div style="left:428px;top:530px;width:1px;height:18px;background:#d4d4d4"></div>
<div class="t" style="left:423.14px;top:531.15px;width:71.06px;height:16px;line-height:16px;font-size:11.4px;text-align:right;transform:scaleX(0.9317);transform-origin:100% 50%;color:#111;">25</div>
<div style="left:497.4px;top:530px;width:1px;height:18px;background:#d4d4d4"></div>
<div class="t" style="left:499.80px;top:531.15px;width:34.36px;height:16px;line-height:16px;font-size:11.4px;text-align:left;transform:scaleX(0.9663);transform-origin:0 50%;color:#111;">tonna</div>
<div style="left:533px;top:530px;width:1px;height:18px;background:#d4d4d4"></div>
<div class="t" style="left:530.28px;top:531.15px;width:67.92px;height:16px;line-height:16px;font-size:11.4px;text-align:right;transform:scaleX(0.9600);transform-origin:100% 50%;color:#111;">100,12</div>
<div style="left:601.4px;top:530px;width:1px;height:18px;background:#d4d4d4"></div>
<div class="t" style="left:596.60px;top:531.15px;width:70.20px;height:16px;line-height:16px;font-size:11.4px;text-align:right;transform:scaleX(0.9317);transform-origin:100% 50%;color:#111;">27</div>
<div style="left:670px;top:530px;width:1px;height:18px;background:#d4d4d4"></div>
<div class="t" style="left:665.22px;top:531.15px;width:69.98px;height:16px;line-height:16px;font-size:11.4px;text-align:right;transform:scaleX(0.9317);transform-origin:100% 50%;color:#111;">30</div>
<div style="left:738.4px;top:530px;width:1px;height:18px;background:#d4d4d4"></div>
<div class="t" style="left:733.72px;top:531.15px;width:68.48px;height:16px;line-height:16px;font-size:11.4px;text-align:right;transform:scaleX(0.9317);transform-origin:100% 50%;color:#111;">8</div>
<div style="left:805.4px;top:530px;width:1px;height:18px;background:#d4d4d4"></div>
<div class="t" style="left:800.54px;top:531.15px;width:71.06px;height:16px;line-height:16px;font-size:11.4px;text-align:right;transform:scaleX(0.9317);transform-origin:100% 50%;color:#111;">38</div>
<div style="left:874.8px;top:530px;width:1px;height:18px;background:#d4d4d4"></div>
<svg class="a" style="left:12px;top:457px" width="20" height="40" viewBox="12 457 20 40"><g transform="scale(1.137778)"><path d="M16.6 421.8 L20 425.3 L16.6 428.8 Z" fill="#555"/><circle cx="18.6" cy="409.7" r="2.7" fill="#a6a6a6"/></g></svg>
<div style="left:8px;top:737px;width:1008px;height:4px;background:#e9e9ed"></div>
<div style="left:8px;top:740.8px;width:1008px;height:1px;background:#cfcfd3"></div>
<div style="left:8px;top:741.8px;width:1008px;height:18.2px;background:#f0f0f0"></div>
<div class="t" style="left:10.20px;top:743.24px;width:828.31px;height:16px;line-height:16px;font-size:12px;text-align:left;transform:scaleX(0.9658);transform-origin:0 50%;">Alt+S - Szűrés; CTRL+H - Súgó; Alt+T - Részletek; Alt+N - Nyomtat; F9 - Sor/mező kijelölése; ESC - Bezár</div>
<svg class="a" style="left:1000px;top:745px" width="16" height="16" viewBox="1000 745 16 16"><g transform="scale(1.137778)"><rect x="889.6" y="658.6" width="1.5" height="1.5" fill="#a5a5a5"/><rect x="887" y="661.4" width="1.5" height="1.5" fill="#a5a5a5"/><rect x="889.6" y="661.4" width="1.5" height="1.5" fill="#a5a5a5"/><rect x="884.2" y="664.2" width="1.5" height="1.5" fill="#a5a5a5"/><rect x="887" y="664.2" width="1.5" height="1.5" fill="#a5a5a5"/><rect x="889.6" y="664.2" width="1.5" height="1.5" fill="#a5a5a5"/></g></svg>
</div>
</body>
</html>
